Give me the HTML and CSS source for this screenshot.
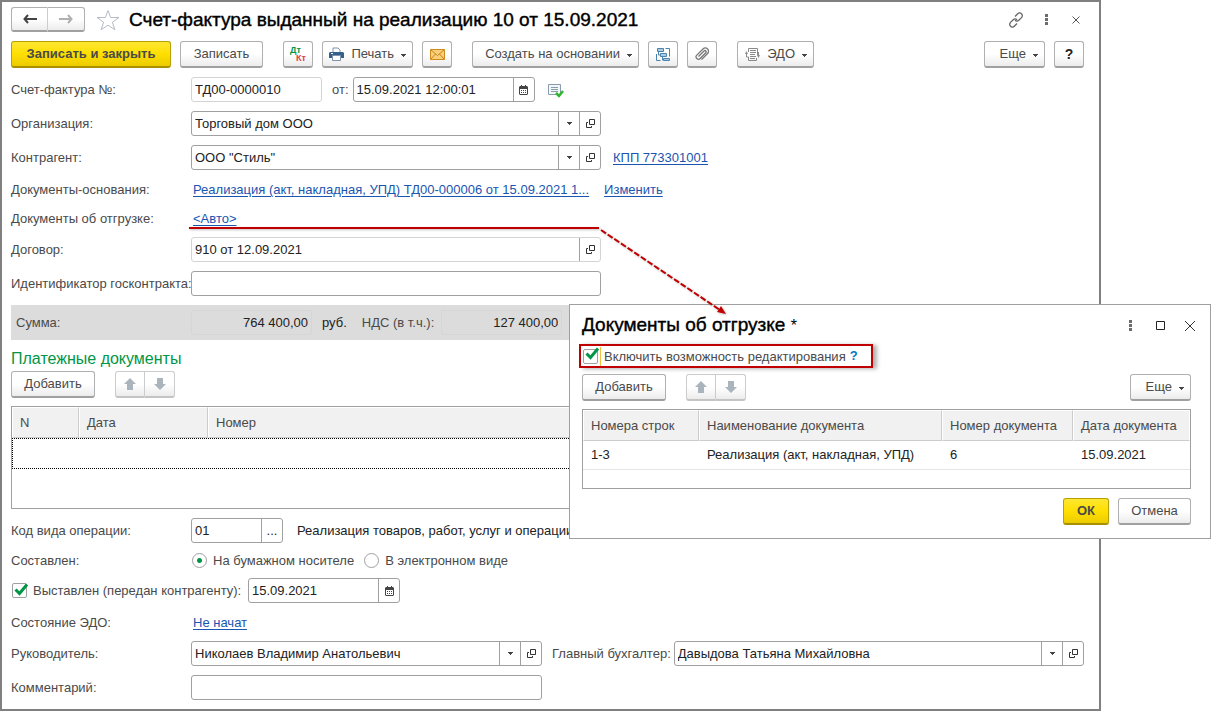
FILE: index.html
```html
<!DOCTYPE html>
<html lang="ru">
<head>
<meta charset="utf-8">
<title>Счет-фактура выданный</title>
<link rel="stylesheet" href="styles.css">
</head>
<body>
<svg class="sprite" aria-hidden="true">
  <symbol id="open" viewBox="0 0 11 11"><path d="M4.5 1.5h5v5h-5zM3 4.500h-1.500v5h5V8" fill="none" stroke="#333" stroke-width="1"/></symbol>
  <symbol id="caret" viewBox="0 0 5 3"><path d="M0 0h5v1h-1v1h-1v1h-1v-1h-1v-1h-1z" fill="#444"/></symbol>
  <symbol id="calendar" viewBox="0 0 9 10"><path d="M1 1h1V0h1v1h3V0h1v1h1l1 1v7l-1 1H1L0 9V2z" fill="#444"/><path d="M1 4h7v5H1z" fill="#fff"/><path d="M2 5h1v1H2zM4 5h1v1H4zM6 5h1v1H6zM2 7h1v1H2zM4 7h1v1H4zM6 7h1v1H6z" fill="#444"/></symbol>
  <symbol id="up" viewBox="0 0 12 12"><path d="M6 0l6 6H9v6H3V6H0z" fill="#a9b4bc"/></symbol>
  <symbol id="down" viewBox="0 0 12 12"><path d="M6 12l6-6H9V0H3v6H0z" fill="#a9b4bc"/></symbol>
  <symbol id="dots" viewBox="0 0 3 11"><path d="M0 0h3v3H0zM0 4h3v3H0zM0 8h3v3H0z" fill="#6b6b6b"/></symbol>
  <symbol id="tick" viewBox="0 0 15 13"><path d="M1.500 6.500L5.500 10.500 13 1.500" fill="none" stroke="#009646" stroke-width="3"/></symbol>
</svg>

<main class="window">
  <header class="titlebar">
    <div class="pair nav">
      <button class="btn" aria-label="Назад"><svg width="14" height="10" viewBox="0 0 14 10"><path d="M5 1L1.500 5 5 9M2 5h12" fill="none" stroke="#444" stroke-width="2"/></svg></button>
      <button class="btn" aria-label="Вперед"><svg width="14" height="10" viewBox="0 0 14 10"><path d="M9 1l3.500 4L9 9M0 5h12" fill="none" stroke="#b0b0b0" stroke-width="2"/></svg></button>
    </div>
    <svg class="star" width="24" height="22" viewBox="0 0 24 22"><path d="M12 1.500l2.600 7h8.400l-6.600 4.700 2.500 7.600-6.900-4.600-6.900 4.600 2.500-7.600L1 8.500h8.400z" fill="none" stroke="#b4bcc8"/></svg>
    <h1>Счет-фактура выданный на реализацию 10 от 15.09.2021</h1>
    <div class="winctl">
      <button class="plain" aria-label="Ссылка"><svg width="16" height="16" viewBox="0 0 16 16" fill="none" stroke="#666" stroke-width="1.300"><path d="M7 4.500l2.700-2.700a2.600 2.600 0 0 1 3.800 0 2.600 2.600 0 0 1 0 3.800L10.800 8.300a2.600 2.600 0 0 1-3.800 0M9 11.500l-2.700 2.700a2.600 2.600 0 0 1-3.800 0 2.600 2.600 0 0 1 0-3.800L5.200 7.700a2.600 2.600 0 0 1 3.800 0"/></svg></button>
      <button class="plain" aria-label="Меню"><svg width="3" height="11"><use href="#dots"/></svg></button>
      <button class="plain" aria-label="Закрыть"><svg width="8" height="8" viewBox="0 0 8 8"><path d="M.5.5l7 7M7.500.5l-7 7" stroke="#555"/></svg></button>
    </div>
  </header>

  <div class="toolbar">
    <button class="btn primary w160">Записать и закрыть</button>
    <button class="btn w83">Записать</button>
    <button class="btn icon gap" aria-label="Проводки"><span class="dtkt"><b>Дт</b><i>Кт</i></span></button>
    <button class="btn menu w91"><svg class="pic" width="15" height="15" viewBox="0 0 15 15"><path d="M4 5V1h5l2 2v2" fill="#fff" stroke="#7d93ab"/><path d="M1 5h13l1 1v5h-3V9H3v2H0V6z" fill="#33618c"/><path d="M3.500 8.500h8v5h-8z" fill="#fff" stroke="#7d93ab"/><path d="M2 6h2v1H2z" fill="#fff"/></svg>Печать<svg class="caret" width="5" height="3"><use href="#caret"/></svg></button>
    <button class="btn icon" aria-label="Письмо"><svg width="15" height="11" viewBox="0 0 15 11"><path d="M.5.5h14v10H.5z" fill="#f9cf7a" stroke="#d08a1d"/><path d="M1 1l6.500 5.500L14 1M1 10l4.500-5M14 10L9.500 5" fill="none" stroke="#c9831b"/></svg></button>
    <button class="btn menu w167 gap">Создать на основании<svg class="caret" width="5" height="3"><use href="#caret"/></svg></button>
    <button class="btn icon" aria-label="Структура"><svg width="15" height="15" viewBox="0 0 15 15" fill="#a9cce6" stroke="#4b83ad"><path d="M1.500 1.500h6v3h-6zM4.500 6.500h6v3h-6zM7.500 11.500h6v2h-6z"/><path d="M9.500 1.500h4v8M.5 7v6.500h4M2.500 5v3h2M6.500 10v3h1" fill="none"/></svg></button>
    <button class="btn icon" aria-label="Файлы"><svg width="14" height="14" viewBox="0 0 14 14"><path d="M3.500 9.500L9 4a1.200 1.200 0 0 1 1.800 1.700L5.200 11.500a2.300 2.300 0 0 1-3.400-3.400L8 2a3.200 3.200 0 0 1 4.600 4.500L6.500 12.600" fill="none" stroke="#777" stroke-width="1.300"/></svg></button>
    <button class="btn menu w77 gap"><svg class="pic" width="15" height="15" viewBox="0 0 15 15" fill="none" stroke="#8a8a8a"><path d="M3.500 5V1.500h9V8M3.500 10v3.500h8V11M5 3.500h6M5 5.500h6M5 7.500h5M5 9.500h6M5 11.500h5M1.500 5v5h2M13.500 10V5"/><path d="M0 7l1.500-3L3 7zM12 8h3l-1.500 3z" fill="#8a8a8a" stroke="none"/></svg>ЭДО<svg class="caret" width="5" height="3"><use href="#caret"/></svg></button>
    <button class="btn menu w61 end">Еще<svg class="caret" width="5" height="3"><use href="#caret"/></svg></button>
    <button class="btn icon help">?</button>
  </div>

  <div class="row">
    <label class="lbl" for="num">Счет-фактура №:</label>
    <div class="field light w131"><input id="num" value="ТД00-0000010" readonly></div>
    <label class="ot" for="dt">от:</label>
    <div class="field w182"><input id="dt" value="15.09.2021 12:00:01"><button aria-label="Календарь"><svg width="9" height="10"><use href="#calendar"/></svg></button></div>
    <svg class="posted" width="16" height="14" viewBox="0 0 16 14"><path d="M.5.500h12v10H.5z" fill="#f4f7fa" stroke="#8a9cb0"/><path d="M3 3.500h7M3 5.500h7M3 7.500h7" stroke="#8a9cb0"/><path d="M8 9l3 3 4-5" fill="none" stroke="#2fb52f" stroke-width="2.500"/></svg>
  </div>
  <div class="row">
    <label class="lbl" for="org">Организация:</label>
    <div class="field w410"><input id="org" value="Торговый дом ООО"><button aria-label="Выбрать"><svg width="5" height="3"><use href="#caret"/></svg></button><button aria-label="Открыть"><svg width="11" height="11"><use href="#open"/></svg></button></div>
  </div>
  <div class="row">
    <label class="lbl" for="contr">Контрагент:</label>
    <div class="field w410"><input id="contr" value="ООО &quot;Стиль&quot;"><button aria-label="Выбрать"><svg width="5" height="3"><use href="#caret"/></svg></button><button aria-label="Открыть"><svg width="11" height="11"><use href="#open"/></svg></button></div>
    <a class="kpp" href="#">КПП 773301001</a>
  </div>
  <div class="row low">
    <span class="lbl">Документы-основания:</span>
    <a class="first" href="#">Реализация (акт, накладная, УПД) ТД00-000006 от 15.09.2021 1...</a>
    <a class="change" href="#">Изменить</a>
  </div>
  <div class="row low">
    <span class="lbl">Документы об отгрузке:</span>
    <a class="first" href="#">&lt;Авто&gt;</a>
  </div>
  <div class="row">
    <label class="lbl" for="dog">Договор:</label>
    <div class="field light w410"><input id="dog" value="910 от 12.09.2021" readonly><button aria-label="Открыть"><svg width="11" height="11"><use href="#open"/></svg></button></div>
  </div>
  <div class="row">
    <label class="lbl" for="gos">Идентификатор госконтракта:</label>
    <div class="field w410"><input id="gos"></div>
  </div>

  <div class="sum">
    <label class="lbl" for="total">Сумма:</label>
    <div class="field flat"><input id="total" value="764 400,00" readonly></div>
    <span class="rub">руб.</span>
    <label class="nds" for="vat">НДС (в т.ч.):</label>
    <div class="field flat"><input id="vat" value="127 400,00" readonly></div>
  </div>

  <section class="pay">
    <h2>Платежные документы</h2>
    <div class="cmds">
      <button class="btn w84">Добавить</button>
      <div class="pair arrows">
        <button class="btn" aria-label="Вверх"><svg width="12" height="12"><use href="#up"/></svg></button>
        <button class="btn" aria-label="Вниз"><svg width="12" height="12"><use href="#down"/></svg></button>
      </div>
    </div>
    <div class="grid tall">
      <table>
        <colgroup><col class="c67"><col class="c129"><col></colgroup>
        <thead><tr><th>N</th><th>Дата</th><th>Номер</th></tr></thead>
        <tbody><tr class="current"><td colspan="3"></td></tr></tbody>
      </table>
    </div>
  </section>

  <div class="row">
    <label class="lbl" for="code">Код вида операции:</label>
    <div class="field w92"><input id="code" value="01"><button aria-label="Выбрать">...</button></div>
    <span class="codetext">Реализация товаров, работ, услуг и операции,</span>
  </div>
  <div class="row thin">
    <span class="lbl">Составлен:</span>
    <label class="radio"><input type="radio" name="form" checked>На бумажном носителе</label>
    <label class="radio"><input type="radio" name="form">В электронном виде</label>
  </div>
  <div class="row">
    <label class="check"><input type="checkbox" checked><svg class="tick" width="15" height="13"><use href="#tick"/></svg>Выставлен (передан контрагенту):</label>
    <div class="field w152"><input value="15.09.2021" aria-label="Дата выставления"><button aria-label="Календарь"><svg width="9" height="10"><use href="#calendar"/></svg></button></div>
  </div>
  <div class="row low">
    <span class="lbl">Состояние ЭДО:</span>
    <a class="first" href="#">Не начат</a>
  </div>
  <div class="row">
    <label class="lbl" for="head">Руководитель:</label>
    <div class="field w351"><input id="head" value="Николаев Владимир Анатольевич"><button aria-label="Выбрать"><svg width="5" height="3"><use href="#caret"/></svg></button><button aria-label="Открыть"><svg width="11" height="11"><use href="#open"/></svg></button></div>
    <label class="acc" for="acc">Главный бухгалтер:</label>
    <div class="field grow"><input id="acc" value="Давыдова Татьяна Михайловна"><button aria-label="Выбрать"><svg width="5" height="3"><use href="#caret"/></svg></button><button aria-label="Открыть"><svg width="11" height="11"><use href="#open"/></svg></button></div>
  </div>
  <div class="row">
    <label class="lbl" for="comm">Комментарий:</label>
    <div class="field w351"><input id="comm"></div>
  </div>
</main>

<section class="dialog" role="dialog" aria-labelledby="dlg">
  <header class="dtitle">
    <h1 id="dlg">Документы об отгрузке <span>*</span></h1>
    <button class="plain" aria-label="Меню"><svg width="3" height="11"><use href="#dots"/></svg></button>
    <button class="plain" aria-label="Развернуть"><svg width="9" height="9" viewBox="0 0 9 9"><path d="M.5.5h8v8h-8z" fill="none" stroke="#222"/></svg></button>
    <button class="plain" aria-label="Закрыть"><svg width="10" height="10" viewBox="0 0 10 10"><path d="M0 0l10 10M10 0L0 10" stroke="#333"/></svg></button>
  </header>
  <div class="marked">
    <label class="check"><input type="checkbox" checked><svg class="tick" width="15" height="13"><use href="#tick"/></svg><span>Включить возможность редактирования</span></label>
    <button class="plain q">?</button>
  </div>
  <div class="cmds">
    <button class="btn w84">Добавить</button>
    <div class="pair arrows">
      <button class="btn" aria-label="Вверх"><svg width="12" height="12"><use href="#up"/></svg></button>
      <button class="btn" aria-label="Вниз"><svg width="12" height="12"><use href="#down"/></svg></button>
    </div>
    <button class="btn menu w61 end">Еще<svg class="caret" width="5" height="3"><use href="#caret"/></svg></button>
  </div>
  <div class="grid short">
    <table>
      <colgroup><col class="c116"><col><col class="c131"><col class="c117"></colgroup>
      <thead><tr><th>Номера строк</th><th>Наименование документа</th><th>Номер документа</th><th>Дата документа</th></tr></thead>
      <tbody><tr><td>1-3</td><td>Реализация (акт, накладная, УПД)</td><td>6</td><td>15.09.2021</td></tr></tbody>
    </table>
  </div>
  <footer>
    <button class="btn primary w46">ОК</button>
    <button class="btn w73">Отмена</button>
  </footer>
</section>

<svg class="pointer" width="740" height="320" viewBox="0 0 740 320" aria-hidden="true">
  <path d="M189 228H599" stroke="#c00000" stroke-width="2"/>
  <path d="M601 230L720 310" stroke="#c00000" stroke-width="2" stroke-dasharray="6 2"/>
  <path d="M726 314l-9-2 4-6z" fill="#c00000"/>
</svg>
</body>
</html>
```
FILE: styles.css
```css
* { box-sizing: border-box; }
body {
  margin: 0;
  padding-right: 112px;
  background: #fff;
  color: #4a4a4a;
  font: 13px/16px "Liberation Sans", Arial, sans-serif;
  position: relative;
}
button, input { font: inherit; color: inherit; margin: 0; }
svg { display: block; flex: none; }
.sprite { position: absolute; width: 0; height: 0; }
a { color: #1a55b0; text-decoration: underline; text-underline-offset: 2px; white-space: nowrap; }
label, span { white-space: nowrap; }
h1, h2 { margin: 0; font-weight: normal; }

.window {
  border: 2px solid #808080;
  padding: 5px 15px 9px 9px;
  display: flex;
  flex-direction: column;
  gap: 9px;
}
.titlebar, .toolbar, .row, .cmds, .sum { display: flex; align-items: center; }
.titlebar { height: 25px; }
.titlebar h1, .dtitle h1 { font-size: 19px; line-height: 24px; color: #000; white-space: nowrap; -webkit-text-stroke: 0.4px #000; }
.star { margin: 0 9px 0 11px; }
.winctl { margin-left: auto; display: flex; align-items: center; }
.plain {
  border: 0; padding: 0; background: none;
  width: 30px; height: 24px;
  display: flex; align-items: center; justify-content: center;
}
.winctl .plain:last-child { margin-right: -7px; }

.btn {
  height: 27px;
  padding: 0 4px;
  border: 1px solid #b0b0b0;
  border-bottom: 2px solid #a0a0a0;
  border-radius: 3px;
  background: linear-gradient(#fff 50%, #ececec);
  display: flex; align-items: center; justify-content: center;
  white-space: nowrap;
}
.toolbar { gap: 9px; }
.gap { margin-left: 11px; }
.end { margin-left: auto; }
.primary {
  background: linear-gradient(#ffe733, #ffdf00 50%, #eccc00);
  border-color: #b8a000; border-bottom-color: #a89000;
  font-weight: bold;
}
.icon { width: 30px; padding: 0; }
.menu { padding: 0 6px; justify-content: flex-end; }
.pic { margin-right: 7px; }
.caret { margin: 2px 0 0 7px; }
.help { font-weight: bold; font-size: 14px; color: #222; }
.dtkt { display: grid; font-size: 9px; line-height: 8px; font-weight: bold; text-align: left; }
.dtkt b { color: #009646; }
.dtkt i { color: #e04040; font-style: normal; padding-left: 6px; }
.pair { display: flex; }
.pair .btn:first-child { border-radius: 3px 0 0 3px; border-right-color: #ccc; }
.pair .btn:last-child { border-radius: 0 3px 3px 0; border-left: 0; }
.nav .btn { width: 37px; height: 25px; }
.arrows { margin-left: 20px; }
.arrows .btn { width: 30px; border-color: #ccc; border-bottom-color: #c4c4c4; }

.row { height: 25px; }
.low { height: 20px; padding-top: 2px; }
.thin { height: 17px; }
.lbl { width: 180px; flex: none; }
.field {
  height: 25px;
  flex: none;
  display: flex;
  border: 1px solid #a0a0a0;
  border-radius: 3px;
  background: #fff;
  color: #222;
  overflow: hidden;
}
.field input { flex: 1; min-width: 0; width: 0; border: 0; padding: 0 3px; background: none; outline: 0; }
.field button {
  width: 21px; padding: 0;
  border: 0; border-left: 1px solid #a0a0a0;
  background: none;
  display: flex; align-items: center; justify-content: center;
}
.light { border-color: #d4d4d4; }
.grow { flex: 1; }
.ot { margin: 0 4px 0 10px; }
.posted { margin: 3px 0 0 13px; }
.kpp { margin-left: 12px; }
.first { margin-left: 2px; }
.change { margin-left: 15px; }
.codetext { margin-left: 14px; color: #222; }
.acc { margin: 0 3px 0 10px; }

.sum { height: 35px; background: #dcdcdc; padding-left: 5px; }
.sum .lbl { width: 175px; }
.flat { width: 121px; background: none; border-color: #d6d6d6; }
.flat input { text-align: right; }
.rub { margin: 0 15px 0 10px; color: #222; }
.nds { margin-right: 7px; }

.pay h2 { font-size: 16px; line-height: 20px; color: #009646; padding-bottom: 2px; }
.pay .cmds { margin-bottom: 8px; }
.grid { border: 1px solid #a0a0a0; }
.tall { height: 103px; }
.short { height: 80px; margin-top: 8px; }
table { width: 100%; border-collapse: separate; border-spacing: 0; table-layout: fixed; }
th, td { padding: 0 7px; text-align: left; font-weight: normal; white-space: nowrap; }
th { height: 31px; background: #f1f1f1; border: 1px solid #fff; border-right-color: #ccc; border-bottom-color: #ccc; }
th:last-child { border-right-color: #fff; }
td { height: 29px; color: #222; border-bottom: 1px solid #e4e4e4; padding-left: 8px; }
.current td { height: 31px; border: 1px dotted #000; }

.radio, .check { display: flex; align-items: center; position: relative; }
.radio + .radio { margin-left: 9px; }
.radio input {
  appearance: none;
  width: 15px; height: 15px; margin: 0 6px 0 1px;
  border: 1px solid #a0a0a0; border-radius: 50%;
}
.radio input:checked { background: radial-gradient(#009646 2px, #fff 3px); }
.check input {
  appearance: none;
  width: 15px; height: 15px; margin: 0 6px 0 1px;
  border: 1px solid #a0a0a0; border-radius: 2px; background: #fff;
}
.tick { position: absolute; left: 3px; top: 0; }
.window .check { width: 237px; }

.dialog {
  position: absolute;
  left: 569px; right: 2px; top: 304px;
  background: #fff;
  border: 1px solid #a0a0a0;
  padding: 8px 19px 13px 12px;
}
.dtitle { display: flex; align-items: center; height: 25px; margin-right: -14px; }
.dtitle h1 { margin-right: auto; }
.dtitle span { font-size: 16px; -webkit-text-stroke: 0; }
.marked {
  display: flex; align-items: center;
  width: 294px; height: 24px;
  margin: 6px 0 6px -3px;
  border: 2px solid #c00000;
  box-shadow: 4px 1px 4px rgba(0,0,0,.3);
  padding-left: 1px;
}
.marked .check input { margin-right: 2px; }
.marked .check span { border-left: 1px solid #f0c040; padding-left: 3px; line-height: 19px; }
.q { width: 10px; height: 20px; margin-left: 3px; color: #0078c8; font-weight: bold; }
.dialog footer { display: flex; justify-content: flex-end; gap: 9px; margin-top: 9px; }
.pointer { position: absolute; left: 0; top: 0; pointer-events: none; filter: drop-shadow(1px 1px 1px rgba(0,0,0,.25)); }

.w46 { width: 46px; }
.w61 { width: 61px; }
.w73 { width: 73px; }
.w77 { width: 77px; }
.w83 { width: 83px; }
.w84 { width: 84px; }
.w91 { width: 91px; }
.w92 { width: 92px; }
.w131 { width: 131px; }
.w152 { width: 152px; }
.w160 { width: 160px; }
.w167 { width: 167px; }
.w182 { width: 182px; }
.w351 { width: 351px; }
.w410 { width: 410px; }
.c67 { width: 67px; }
.c116 { width: 116px; }
.c117 { width: 117px; }
.c129 { width: 129px; }
.c131 { width: 131px; }
```
